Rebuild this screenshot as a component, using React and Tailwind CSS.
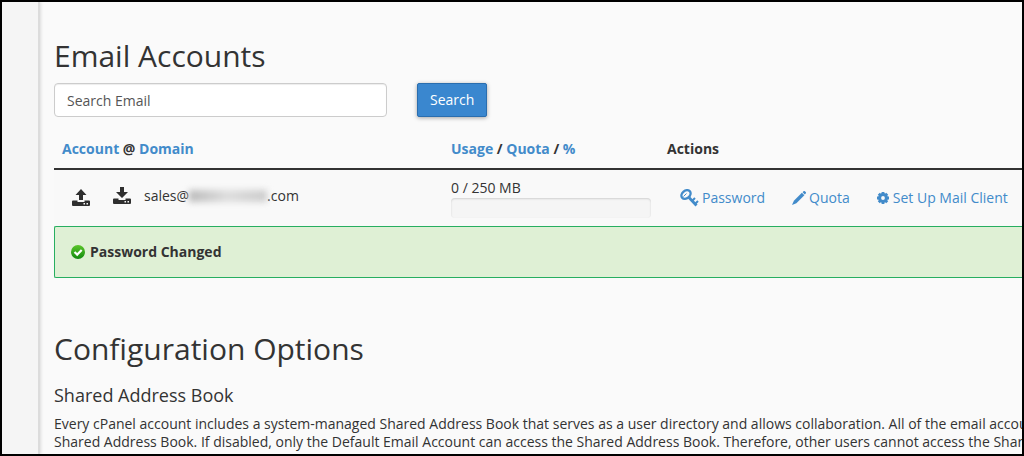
import { useState } from "react";

const LINK = "text-[#428bca] hover:underline";

// tray with an arrow going out of it (restrict) or into it (reset)
function TrayIcon({ up }) {
  return (
    <svg viewBox="0 0 18 17" className="h-[17px] w-[18px] shrink-0" fill="#2f2f2f" aria-hidden="true">
      {up ? (
        <path d="M9 0l5.500 6H11v5H7V6H3.500z" />
      ) : (
        <path d="M7 0h4v5h4L9 11 3 5h4z" />
      )}
      <path
        fillRule="evenodd"
        d="M1 11.500h4.500V13h7v-1.500H17a1 1 0 0 1 1 1V16a1 1 0 0 1-1 1H1a1 1 0 0 1-1-1v-3.500a1 1 0 0 1 1-1zM11.500 14v1.500H13V14zM14.500 14v1.500H16V14z"
      />
    </svg>
  );
}

function KeyIcon() {
  return (
    <svg viewBox="0 0 19 18" className="h-[18px] w-[19px] shrink-0" fill="none" stroke="currentColor" aria-hidden="true">
      <ellipse cx="6" cy="5.500" rx="5" ry="3.800" strokeWidth="2.400" transform="rotate(-40 6 5.500)" />
      <path d="M8.500 8l8 8.500" strokeWidth="2.800" />
      <path d="M12 12l3-3M15 15l3-3" strokeWidth="2" />
      <path d="M3.500 7.500l3-3" strokeWidth="1" />
    </svg>
  );
}

function PencilIcon() {
  return (
    <svg viewBox="0 0 14 14" className="h-[14px] w-[14px] shrink-0" fill="currentColor" aria-hidden="true">
      <path d="M10.600 1.200l.9-.9a1 1 0 0 1 1.400 0l.8.8a1 1 0 0 1 0 1.400l-.9.900z" />
      <path d="M9.900 1.800l2.500 2.500-8 7.900L0 14l1.900-4.300z" />
    </svg>
  );
}

function GearIcon() {
  const teeth = [0, 45, 90, 135];
  return (
    <svg viewBox="0 0 12 12" className="h-3 w-3 shrink-0" aria-hidden="true">
      {teeth.map((deg) => (
        <path key={deg} d="M6 0v2.500M6 9.500V12" stroke="currentColor" strokeWidth="2.800" transform={`rotate(${deg} 6 6)`} />
      ))}
      <circle cx="6" cy="6" r="3.400" fill="none" stroke="currentColor" strokeWidth="3" />
    </svg>
  );
}

function SuccessIcon() {
  return (
    <svg viewBox="0 0 14 14" className="h-[14px] w-[14px] shrink-0" aria-hidden="true">
      <defs>
        <linearGradient id="ok" x1="0" y1="0" x2="0" y2="1">
          <stop offset="0" stopColor="#5cc62b" />
          <stop offset="1" stopColor="#118a10" />
        </linearGradient>
      </defs>
      <circle cx="7" cy="7" r="7" fill="url(#ok)" />
      <path d="M3.500 7l2.700 2.600L10.700 5" fill="none" stroke="#fff" strokeWidth="2.200" />
    </svg>
  );
}

export default function App() {
  const [query, setQuery] = useState("");

  return (
    <div className="flex h-screen overflow-hidden border-2 border-black bg-[#fafafa] font-['Open_Sans',sans-serif] text-sm text-[#333]">
      {/* SIDEBAR EDGE */}
      <aside className="w-[38px] shrink-0 border-r-2 border-[#dcdcdc] bg-[#f5f5f5] shadow-[1px_0_3px_rgba(0,0,0,0.12)]" />

      <main className="min-w-0 flex-1 pt-[37px] pl-[14px]">
        <h1 className="text-[30px] leading-[33px]">Email Accounts</h1>

        {/* SEARCH */}
        <form className="mt-[11px] flex gap-[30px]" onSubmit={(e) => e.preventDefault()}>
          <input
            type="text"
            aria-label="Search Email"
            placeholder="Search Email"
            value={query}
            onChange={(e) => setQuery(e.target.value)}
            className="h-[34px] w-[333px] rounded border border-[#ccc] bg-white px-3 shadow-[inset_0_1px_1px_rgba(0,0,0,0.075)] placeholder:text-[#555]"
          />
          <button
            type="submit"
            className="h-[34px] rounded-xs border border-[#2a6eaf] bg-[#3a87cf] px-3 text-white shadow-[0_1px_4px_rgba(0,0,0,0.35)]"
          >
            Search
          </button>
        </form>

        {/* ACCOUNTS */}
        <table className="mt-3 w-full table-fixed whitespace-nowrap">
          <thead>
            <tr className="h-10 border-b-2 border-[#333] text-left">
              <th className="w-[389px] px-2 pt-px font-bold">
                <a href="#account" className={LINK}>Account</a> @ <a href="#domain" className={LINK}>Domain</a>
              </th>
              <th className="w-[216px] px-2 pt-px font-bold">
                <a href="#usage" className={LINK}>Usage</a> / <a href="#quota" className={LINK}>Quota</a> /{" "}
                <a href="#percent" className={LINK}>%</a>
              </th>
              <th className="px-2 pt-px font-bold">Actions</th>
            </tr>
          </thead>
          <tbody>
            <tr className="h-[57px] bg-[#f9f9f9]">
              <td className="px-2 pb-px">
                <div className="flex items-center pb-1 pl-2.5">
                  <button type="button" aria-label="Upload" className="pt-1">
                    <TrayIcon up />
                  </button>
                  <button type="button" aria-label="Download" className="ml-[23px]">
                    <TrayIcon />
                  </button>
                  <span className="ml-[13px]">sales@</span>
                  <span className="h-3 w-[78px] bg-linear-to-r from-[#bbb] via-[#ddd] to-[#ccc] blur-[3px]" />
                  <span>.com</span>
                </div>
              </td>
              <td className="px-2 pb-px">
                <div className="leading-5">0 / 250 MB</div>
                <div className="h-5 w-[200px] rounded bg-[#f5f5f5] shadow-[inset_0_1px_2px_rgba(0,0,0,0.15)]" />
              </td>
              <td className="px-2 pb-px">
                <div className="flex items-center pl-[13px]">
                  <a href="#password" className={`flex items-center gap-[3px] ${LINK}`}>
                    <KeyIcon />
                    Password
                  </a>
                  <a href="#edit-quota" className={`ml-[27px] flex items-center gap-[3px] ${LINK}`}>
                    <PencilIcon />
                    Quota
                  </a>
                  <a href="#mail-client" className={`ml-[27px] flex items-center gap-1 ${LINK}`}>
                    <GearIcon />
                    Set Up Mail Client
                  </a>
                </div>
              </td>
            </tr>
          </tbody>
        </table>

        {/* STATUS */}
        <div role="status" className="flex h-[52px] items-center gap-[5px] rounded-l-xs border border-r-0 border-[#27ae60] bg-[#dff0d5] pl-4 font-bold">
          <SuccessIcon />
          Password Changed
        </div>

        {/* CONFIGURATION */}
        <h1 className="mt-[54px] text-[30px] leading-[33px]">Configuration Options</h1>
        <h2 className="mt-5 text-lg leading-5">Shared Address Book</h2>
        <p className="mt-2.5 leading-[18px] whitespace-nowrap">
          Every cPanel account includes a system-managed Shared Address Book that serves as a user directory and allows collaboration. All of the email accounts
          <br />
          Shared Address Book. If disabled, only the Default Email Account can access the Shared Address Book. Therefore, other users cannot access the Shared
        </p>
      </main>
    </div>
  );
}
